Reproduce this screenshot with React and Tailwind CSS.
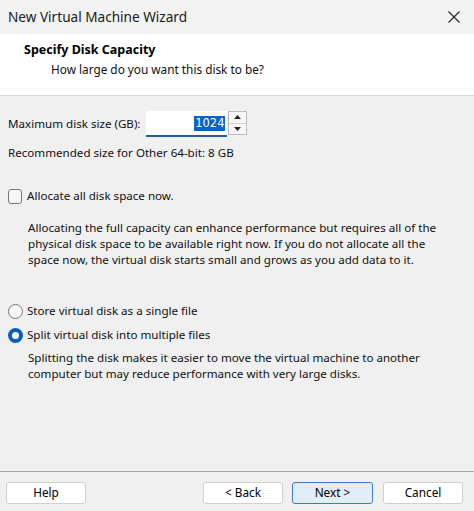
export default function App() {
  const font = { fontFamily: '"Noto Sans", "Open Sans", sans-serif' };
  return (
    <div className="w-[474px] h-[511px] flex flex-col bg-[#f0f0f0] text-[#000] overflow-hidden" style={font}>
      {/* Title bar */}
      <div className="h-[34px] bg-[#f3f3f3] flex items-center justify-between pl-[8px] pr-[14px] shrink-0">
        <span className="text-[13.6px] text-[#1a1a1a]">New Virtual Machine Wizard</span>
        <svg width="12" height="12" viewBox="0 0 12 12">
          <path d="M0.5 0.5 L11.5 11.5 M11.5 0.5 L0.5 11.5" stroke="#222" strokeWidth="1.1" />
        </svg>
      </div>
      {/* Header */}
      <div className="h-[62px] bg-white border-b border-[#d9d9d9] flex flex-col pt-[7px] shrink-0">
        <div className="pl-[24px] text-[12.5px] font-bold leading-[17px]">Specify Disk Capacity</div>
        <div className="pl-[51px] text-[11.8px] leading-[17px] mt-[3px] text-[#111]">How large do you want this disk to be?</div>
      </div>
      {/* Body */}
      <div className="flex-1 flex flex-col px-[8px] text-[11.6px] leading-[16px] text-[#111]">
        <div className="flex items-center mt-[15px]">
          <span>Maximum disk size (GB):</span>
          <div className="ml-[6px] w-[81px] h-[26px] bg-white border-b-2 border-[#1e5fa8] flex items-center justify-end pr-[2px]">
            <span className="bg-[#0a64c8] text-white px-[1px] leading-[15px] font-['DejaVu_Sans',sans-serif] text-[11.5px]">1024</span>
          </div>
          <div className="ml-[1px] w-[19px] h-[24px] border border-[#bcbcbc] bg-[#f7f7f7] flex flex-col self-start">
            <div className="flex-1 flex items-center justify-center border-b border-[#d0d0d0]">
              <svg width="7" height="4" viewBox="0 0 7 4"><path d="M0 4 L3.5 0 L7 4 Z" fill="#222" /></svg>
            </div>
            <div className="flex-1 flex items-center justify-center">
              <svg width="7" height="4" viewBox="0 0 7 4"><path d="M0 0 L3.5 4 L7 0 Z" fill="#222" /></svg>
            </div>
          </div>
        </div>
        <div className="mt-[8px]">Recommended size for Other 64-bit: 8 GB</div>

        <div className="flex items-center mt-[27px]">
          <div className="w-[14px] h-[15px] border border-[#777] rounded-[3px] bg-[#f7f7f7]"></div>
          <span className="ml-[5px]">Allocate all disk space now.</span>
        </div>
        <div className="pl-[20px] mt-[16px]">
          <div>Allocating the full capacity can enhance performance but requires all of the</div>
          <div>physical disk space to be available right now. If you do not allocate all the</div>
          <div>space now, the virtual disk starts small and grows as you add data to it.</div>
        </div>

        <div className="flex items-center mt-[35px]">
          <div className="w-[15px] h-[15px] border border-[#777] rounded-full bg-[#f7f7f7]"></div>
          <span className="ml-[4px]">Store virtual disk as a single file</span>
        </div>
        <div className="flex items-center mt-[8px]">
          <div className="w-[15px] h-[15px] rounded-full bg-[#0a5fb4] flex items-center justify-center">
            <div className="w-[7px] h-[7px] rounded-full bg-white"></div>
          </div>
          <span className="ml-[4px]">Split virtual disk into multiple files</span>
        </div>
        <div className="pl-[20px] mt-[7px]">
          <div>Splitting the disk makes it easier to move the virtual machine to another</div>
          <div>computer but may reduce performance with very large disks.</div>
        </div>
      </div>
      {/* Footer */}
      <div className="h-[40px] border-t border-[#a8a8a8] flex items-start pt-[10px] px-[6px] shrink-0 text-[11.8px]">
        <button className="w-[80px] h-[22px] bg-white border border-[#d0d0d0] rounded-[3px]">Help</button>
        <div className="flex-1"></div>
        <button className="w-[80px] h-[22px] bg-white border border-[#d0d0d0] rounded-[3px]">&lt; Back</button>
        <button className="ml-[9px] w-[81px] h-[22px] bg-[#e1eefa] border border-[#3a7cc0] rounded-[3px]">Next &gt;</button>
        <button className="ml-[10px] mr-[5px] w-[80px] h-[22px] bg-white border border-[#d0d0d0] rounded-[3px]">Cancel</button>
      </div>
    </div>
  );
}
